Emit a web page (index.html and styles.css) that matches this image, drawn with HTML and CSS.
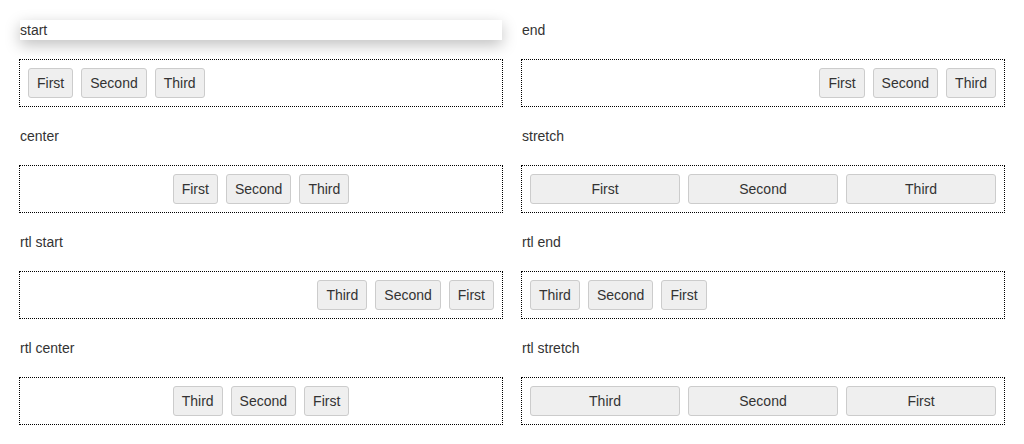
FILE: index.html
```html
<!DOCTYPE html>
<html>
<head>
<meta charset="utf-8">
<link rel="stylesheet" href="styles.css">
</head>
<body>
<div class="grid">
  <div class="cell">
    <div class="label label-active">start</div>
    <div class="box start"><button class="btn">First</button><button class="btn">Second</button><button class="btn">Third</button></div>
  </div>
  <div class="cell">
    <div class="label">end</div>
    <div class="box end"><button class="btn">First</button><button class="btn">Second</button><button class="btn">Third</button></div>
  </div>
  <div class="cell">
    <div class="label">center</div>
    <div class="box center"><button class="btn">First</button><button class="btn">Second</button><button class="btn">Third</button></div>
  </div>
  <div class="cell">
    <div class="label">stretch</div>
    <div class="box stretch"><button class="btn">First</button><button class="btn">Second</button><button class="btn">Third</button></div>
  </div>
  <div class="cell">
    <div class="label">rtl start</div>
    <div class="box start rtl"><button class="btn">First</button><button class="btn">Second</button><button class="btn">Third</button></div>
  </div>
  <div class="cell">
    <div class="label">rtl end</div>
    <div class="box end rtl"><button class="btn">First</button><button class="btn">Second</button><button class="btn">Third</button></div>
  </div>
  <div class="cell">
    <div class="label">rtl center</div>
    <div class="box center rtl"><button class="btn">First</button><button class="btn">Second</button><button class="btn">Third</button></div>
  </div>
  <div class="cell">
    <div class="label">rtl stretch</div>
    <div class="box stretch rtl"><button class="btn">First</button><button class="btn">Second</button><button class="btn">Third</button></div>
  </div>
</div>
</body>
</html>
```
FILE: styles.css
```css
html, body {
  margin: 0;
  padding: 0;
  background: #fff;
}
body {
  font-family: "Liberation Sans", Arial, sans-serif;
  font-size: 14px;
  color: #333;
}
.grid {
  display: grid;
  grid-template-columns: 482px 482px;
  column-gap: 20px;
  row-gap: 20px;
  padding: 20px;
}
.cell {
  display: flex;
  flex-direction: column;
}
.label {
  height: 20px;
  line-height: 20px;
  margin-bottom: 20px;
}
.label-active {
  background: #fff;
  box-shadow: 0 5px 15px rgba(0, 0, 0, 0.25);
}
.box {
  display: flex;
  align-items: center;
  gap: 8px;
  padding: 8px;
  height: 46px;
  box-sizing: border-box;
  outline: 1px dotted #000;
}
.rtl {
  direction: rtl;
}
.start { justify-content: flex-start; }
.end { justify-content: flex-end; }
.center { justify-content: center; }
.stretch .btn { flex: 1 1 0; }
.btn {
  height: 30px;
  padding: 0 8px;
  margin: 0;
  font-family: "Liberation Sans", Arial, sans-serif;
  font-size: 14px;
  color: #333;
  background: #efefef;
  border: 1px solid #cccccc;
  border-radius: 3px;
  box-sizing: border-box;
}
```
